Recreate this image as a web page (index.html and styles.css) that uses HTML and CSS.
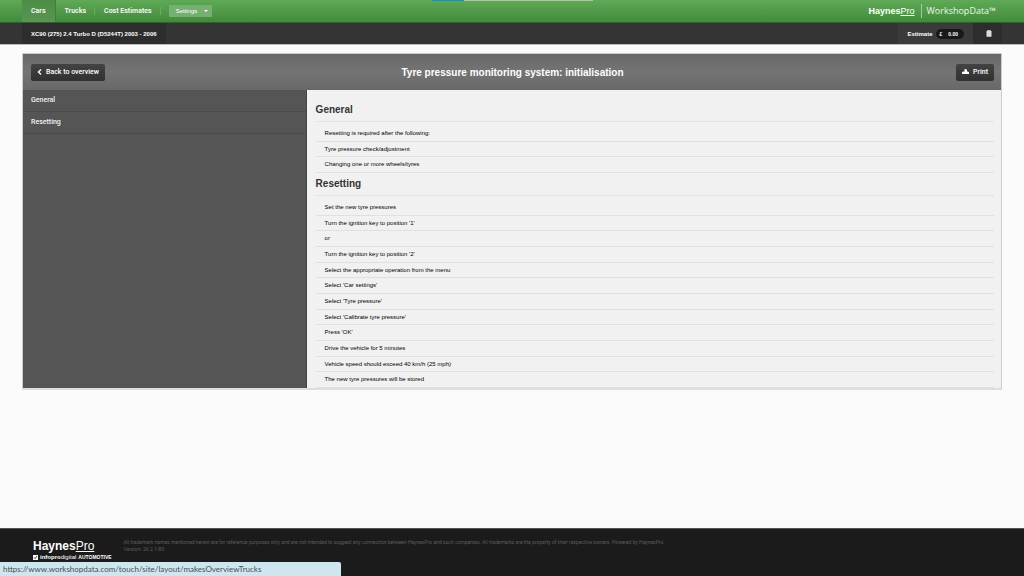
FILE: index.html
```html
<!DOCTYPE html>
<html lang="en">
  <head>
    <meta charset="UTF-8" />
    <meta name="viewport" content="width=device-width, initial-scale=1.0" />
    <link rel="stylesheet" href="styles.css">
    <title>WorkshopData</title>
  </head>

  <body>
    <div class="loading"><span class="loading-done"></span><span class="loading-rest"></span></div>
    <header class="topbar">
      <nav class="nav">
        <a class="nav-item active" href="#">Cars</a>
        <a class="nav-item" href="#">Trucks</a>
        <a class="nav-item" href="#">Cost Estimates</a>
        <button class="settings" type="button">Settings <span class="caret"></span></button>
      </nav>
      <div class="brand">
        <span class="logo">Haynes<span class="pro">Pro</span></span>
        <span class="product">WorkshopData™</span>
      </div>
    </header>

    <div class="subbar">
      <a class="vehicle" href="#">XC90 (275) 2.4 Turbo D (D5244T) 2003 - 2006</a>
      <div class="tools">
        <a class="estimate" href="#">Estimate <span class="amount"><span>£</span><span>0.00</span></span></a>
        <button class="notes" type="button" aria-label="Notes">
          <svg width="6" height="7" viewBox="0 0 6 7"><path d="M0.5 1H1V0.3h4V1h0.5v5.7h-5z" fill="#ddd"/></svg>
        </button>
      </div>
    </div>

    <main class="panel">
      <div class="panel-head">
        <button class="btn" type="button">
          <svg width="5" height="6" viewBox="0 0 5 6"><path d="M4 0.5L1.5 3L4 5.5" fill="none" stroke="#fff" stroke-width="1.4"/></svg>
          Back to overview
        </button>
        <h1>Tyre pressure monitoring system: initialisation</h1>
        <button class="btn print" type="button">
          <svg width="7" height="6" viewBox="0 0 7 6"><path d="M2.5 0h1.5l1 1v1.5h1l1 1v1.5H0V3.5l1-1h1.5z" fill="#fff"/></svg>
          Print
        </button>
      </div>
      <div class="panel-body">
        <nav class="side">
          <a href="#general">General</a>
          <a href="#resetting">Resetting</a>
        </nav>
        <div class="content">
          <h2 id="general">General</h2>
          <ul class="intro">
            <li>Resetting is required after the following:</li>
            <li>Tyre pressure check/adjustment</li>
            <li>Changing one or more wheels/tyres</li>
          </ul>
          <h2 id="resetting">Resetting</h2>
          <ul class="steps">
            <li>Set the new tyre pressures</li>
            <li>Turn the ignition key to position '1'</li>
            <li>or</li>
            <li>Turn the ignition key to position '2'</li>
            <li>Select the appropriate operation from the menu</li>
            <li>Select 'Car settings'</li>
            <li>Select 'Tyre pressure'</li>
            <li>Select 'Calibrate tyre pressure'</li>
            <li>Press 'OK'</li>
            <li>Drive the vehicle for 5 minutes</li>
            <li>Vehicle speed should exceed 40 km/h (25 mph)</li>
            <li>The new tyre pressures will be stored</li>
          </ul>
        </div>
      </div>
    </main>

    <footer class="footer">
      <div class="footer-brand">
        <div class="logo">Haynes<span class="pro">Pro</span></div>
        <div class="group">
          <svg width="5" height="5" viewBox="0 0 5 5"><path d="M0 0h5v5H0z" fill="#fff"/><path d="M1 2.5l1 1.2 2-2.7" fill="none" stroke="#1b1b1b" stroke-width="0.8"/></svg>
          <span><b>infopro</b>digital</span> <span class="auto">AUTOMOTIVE</span>
        </div>
      </div>
      <p>All trademark names mentioned herein are for reference purposes only and are not intended to suggest any connection between HaynesPro and such companies. All trademarks are the property of their respective owners. Powered by HaynesPro.<br>Version- 26.2.1-R0</p>
    </footer>
    <div class="status">https://www.workshopdata.com/touch/site/layout/makesOverviewTrucks</div>
  </body>
</html>
```
FILE: styles.css
```css
* {
  box-sizing: border-box;
}

body {
  margin: 0;
  min-height: 100vh;
  display: flex;
  flex-direction: column;
  background-color: #fbfbfb;
  color: #000;
  font-family: "Liberation Sans", Arial, sans-serif;
  font-size: 6px;
}

a {
  color: inherit;
  text-decoration: none;
}

button {
  font-family: inherit;
  border: none;
  cursor: pointer;
}

.loading {
  position: absolute;
  top: 0;
  left: 0;
  right: 0;
  display: flex;
  justify-content: center;
  height: 1px;
}
.loading-done {
  width: 32px;
  background-color: #2b8f97;
}
.loading-rest {
  width: 129px;
  background-color: #a5cb9f;
}

/* top bars */
.topbar {
  display: flex;
  justify-content: space-between;
  height: 23px;
  padding: 0 28px 0 22px;
  background: linear-gradient(#5fa957, #438b3c);
  border-bottom: 1px solid #32602e;
  color: #eef6ed;
}
.nav {
  display: flex;
  align-items: center;
  font-family: Roboto, sans-serif;
  font-size: 7px;
  font-weight: bold;
}
.nav-item {
  padding: 0 8px 0 9px;
  line-height: 8px;
  border-right: 1px solid #6bab64;
}
.nav-item.active {
  padding: 7px 9px;
  background: linear-gradient(#4c8d46, #5a9553);
  border-right: 1px solid #3f7f39;
}
.settings {
  display: flex;
  align-items: center;
  gap: 7px;
  height: 12px;
  margin-left: 8px;
  padding: 0 4px 0 7px;
  border-radius: 1px;
  background-color: #75b06e;
  color: #fff;
  font-family: "Liberation Sans", Arial, sans-serif;
  font-size: 6px;
}
.caret {
  border: 2px solid transparent;
  border-top-color: #fff;
  border-bottom: none;
}
.brand {
  display: flex;
  align-items: center;
}
.logo {
  font-weight: bold;
  font-size: 9px;
  line-height: 10px;
  color: #fff;
}
.pro {
  font-weight: 400;
  text-decoration: underline;
  text-underline-offset: 1px;
}
.product {
  margin-left: 6px;
  padding-left: 5px;
  border-left: 1px solid #a0cc9b;
  font-family: "Open Sans", sans-serif;
  font-size: 9px;
  line-height: 14px;
}

.subbar {
  display: flex;
  justify-content: space-between;
  height: 22px;
  padding: 0 22px;
  background-color: #343434;
  border-bottom: 1px solid #bbb;
  color: #fff;
}
.vehicle,
.estimate {
  display: flex;
  align-items: center;
  padding: 0 9px;
  background-color: #2d2d2d;
  font-weight: bold;
}
.tools {
  display: flex;
}
.estimate {
  gap: 4px;
  background-color: #3a3a3a;
}
.amount {
  display: flex;
  gap: 6px;
  padding: 0 6px 0 3px;
  border-radius: 5px;
  background-color: #191919;
  font-size: 5px;
  line-height: 10px;
}
.notes {
  display: flex;
  align-items: center;
  padding: 0 10px 0 13px;
  background-color: #2d2d2d;
}

/* main panel */
.panel {
  display: flex;
  flex-direction: column;
  min-height: 337px;
  margin: 8px 22px 0;
  border: 1px solid #ccc;
  border-bottom: 2px solid #dedede;
}
.panel-head {
  display: grid;
  grid-template-columns: 1fr auto 1fr;
  align-items: center;
  height: 36px;
  padding: 0 7px 0 8px;
  background: linear-gradient(#686868, #747474 50%, #686868);
  color: #fff;
}
h1 {
  margin: 0;
  font-size: 10px;
}
.btn {
  display: flex;
  align-items: center;
  justify-self: start;
  gap: 4px;
  height: 17px;
  padding: 0 6px;
  border-radius: 2px;
  background: linear-gradient(#434343, #303030);
  color: #fff;
  font-family: Roboto, sans-serif;
  font-size: 7px;
  font-weight: 500;
}
.print {
  justify-self: end;
}
.panel-body {
  flex: 1;
  display: grid;
  grid-template-columns: 29% 1fr;
}
.side {
  background-color: #555;
  border-right: 1px solid #444;
  color: #f2f2f2;
  font-family: Roboto, sans-serif;
  font-size: 7px;
  font-weight: 500;
}
.side a {
  display: block;
  padding-left: 8px;
  line-height: 21px;
  border-bottom: 1px solid #4a4a4a;
}
.content {
  display: flex;
  flex-direction: column;
  padding: 9px 7px 0 9px;
  background-color: #f1f1f1;
}
h2 {
  margin: 0 0 4px;
  font-size: 10px;
  line-height: 22px;
  border-bottom: 1px solid #e2e2e2;
  color: #333;
}
ul {
  display: flex;
  flex-direction: column;
  margin: 0;
  padding: 0;
  list-style: none;
}
.intro {
  flex: 3;
}
.steps {
  flex: 12;
}
li {
  flex: 1;
  padding-left: 9px;
  line-height: 14px;
  border-bottom: 1px solid #e0e0e0;
}

/* footer */
.footer {
  display: flex;
  gap: 12px;
  height: 48px;
  margin-top: auto;
  padding: 10px 33px 0;
  background-color: #1b1b1b;
  border-top: 1px solid #555;
}
.footer .logo {
  font-size: 12px;
  line-height: 14px;
}
.group {
  display: flex;
  align-items: center;
  gap: 2px;
  color: #fff;
  font-size: 6px;
  line-height: 8px;
}
.auto {
  font-size: 5px;
  font-weight: bold;
}
.footer p {
  margin: 0;
  color: #5c5c5c;
  font-family: Roboto, sans-serif;
  font-size: 5px;
  line-height: 7px;
}
.status {
  position: fixed;
  left: 0;
  bottom: 0;
  width: 341px;
  padding: 0 3px;
  border-top-right-radius: 2px;
  background-color: #cfe6ee;
  color: #3f5257;
  font-family: Lato, sans-serif;
  font-size: 8px;
  line-height: 14px;
}
```
